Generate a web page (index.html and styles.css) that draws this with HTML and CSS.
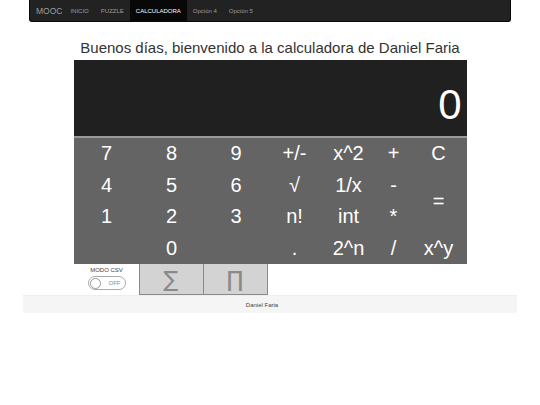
FILE: index.html
```html
<!DOCTYPE html>
<html lang="es">

<head>
  <meta charset="UTF-8">
  <meta name="viewport" content="width=device-width, initial-scale=1.0">
  <title>Calculadora</title>
  <link rel="stylesheet" href="styles.css">
</head>

<body>
  <nav class="navbar">
    <span class="brand">MOOC</span>
    <a class="nav-link">INICIO</a>
    <a class="nav-link">PUZZLE</a>
    <a class="nav-link active">CALCULADORA</a>
    <a class="nav-link small">Opción 4</a>
    <a class="nav-link small">Opción 5</a>
  </nav>

  <h1 class="title">Buenos días, bienvenido a la calculadora de Daniel Faria</h1>

  <main class="calc">
    <div class="display">0</div>

    <div class="keypad">
      <span class="key">7</span>
      <span class="key">8</span>
      <span class="key">9</span>
      <span class="key">+/-</span>
      <span class="key">x^2</span>
      <span class="key">+</span>
      <span class="key">C</span>

      <span class="key">4</span>
      <span class="key">5</span>
      <span class="key">6</span>
      <span class="key">√</span>
      <span class="key">1/x</span>
      <span class="key">-</span>
      <span class="key equals">=</span>

      <span class="key">1</span>
      <span class="key">2</span>
      <span class="key">3</span>
      <span class="key">n!</span>
      <span class="key">int</span>
      <span class="key">*</span>

      <span class="key"></span>
      <span class="key">0</span>
      <span class="key"></span>
      <span class="key">.</span>
      <span class="key">2^n</span>
      <span class="key">/</span>
      <span class="key">x^y</span>
    </div>

    <div class="extra">
      <div class="csv">
        <span class="csv-label">MODO CSV</span>
        <span class="toggle">
          <span class="knob"></span>
          <span class="toggle-text">OFF</span>
        </span>
      </div>
      <button class="op-button">∑</button>
      <button class="op-button">∏</button>
    </div>
  </main>

  <footer class="footer">Daniel Faria</footer>
</body>

</html>
```

FILE: styles.css
```css
*,
*::before,
*::after {
  box-sizing: border-box;
}

body {
  margin: 0;
  font-family: 'Liberation Sans', Arial, sans-serif;
  background: #fff;
  color: #333;
}

.navbar {
  width: 482px;
  height: 22px;
  margin: 0 auto;
  background: #222;
  border: 1px solid #080808;
  border-top: 0;
  border-radius: 0 0 3px 3px;
  display: flex;
  align-items: stretch;
  padding-left: 6px;

  .brand {
    color: #9d9d9d;
    font-size: 8.5px;
    display: flex;
    align-items: center;
    margin-right: 2px;
  }

  .nav-link {
    color: #9d9d9d;
    font-size: 6px;
    display: flex;
    align-items: center;
    padding: 0 6px;
  }

  .active {
    color: #fff;
    background: #080808;
  }
}

.title {
  font-size: 15px;
  font-weight: 400;
  text-align: center;
  margin: 16px 0 3px;
  line-height: 19px;
  color: #333;
}

.calc {
  width: 393px;
  margin: 0 auto;
}

.display {
  height: 78px;
  background: #202020;
  border-bottom: 2px solid #9a9a9a;
  color: #fff;
  font-size: 42px;
  text-align: right;
  padding: 25px 5px 0 0;
  line-height: 40px;
}

.keypad {
  background: #646464;
  display: grid;
  grid-template-columns: 66px 64px 65px 52px 56px 34px 56px;
  grid-template-rows: repeat(4, 31.5px);
  color: #fff;

  .key {
    font-size: 20px;
    display: flex;
    justify-content: center;
    align-items: center;
  }

  .equals {
    grid-row: span 2;
  }
}

.extra {
  display: flex;
  height: 31px;

  .csv {
    width: 66px;
    display: flex;
    flex-direction: column;
    align-items: center;
    padding-top: 2px;
  }

  .csv-label {
    font-size: 6px;
    color: #444;
    line-height: 8px;
  }

  .toggle {
    width: 38px;
    height: 14px;
    border: 1px solid #aaa;
    border-radius: 7px;
    display: flex;
    align-items: center;
    padding: 0 1px;
    margin-top: 2px;
  }

  .knob {
    width: 11px;
    height: 11px;
    border: 1px solid #999;
    border-radius: 50%;
    background: #fff;
  }

  .toggle-text {
    font-size: 6px;
    color: #888;
    margin-left: 8px;
  }

  .op-button {
    width: 65px;
    background: #d3d3d3;
    border: 1px solid #8a8a8a;
    border-top: 0;
    margin-left: -1px;
    color: #8a8a8a;
    font-family: 'DejaVu Sans', sans-serif;
    font-size: 22px;
    padding: 0;
  }
}

.footer {
  width: 494px;
  margin: 0 auto;
  height: 18px;
  background: #f5f5f5;
  border-top: 1px solid #eee;
  font-size: 6px;
  color: #444;
  display: flex;
  justify-content: center;
  align-items: center;
  padding-right: 16px;
}
```
